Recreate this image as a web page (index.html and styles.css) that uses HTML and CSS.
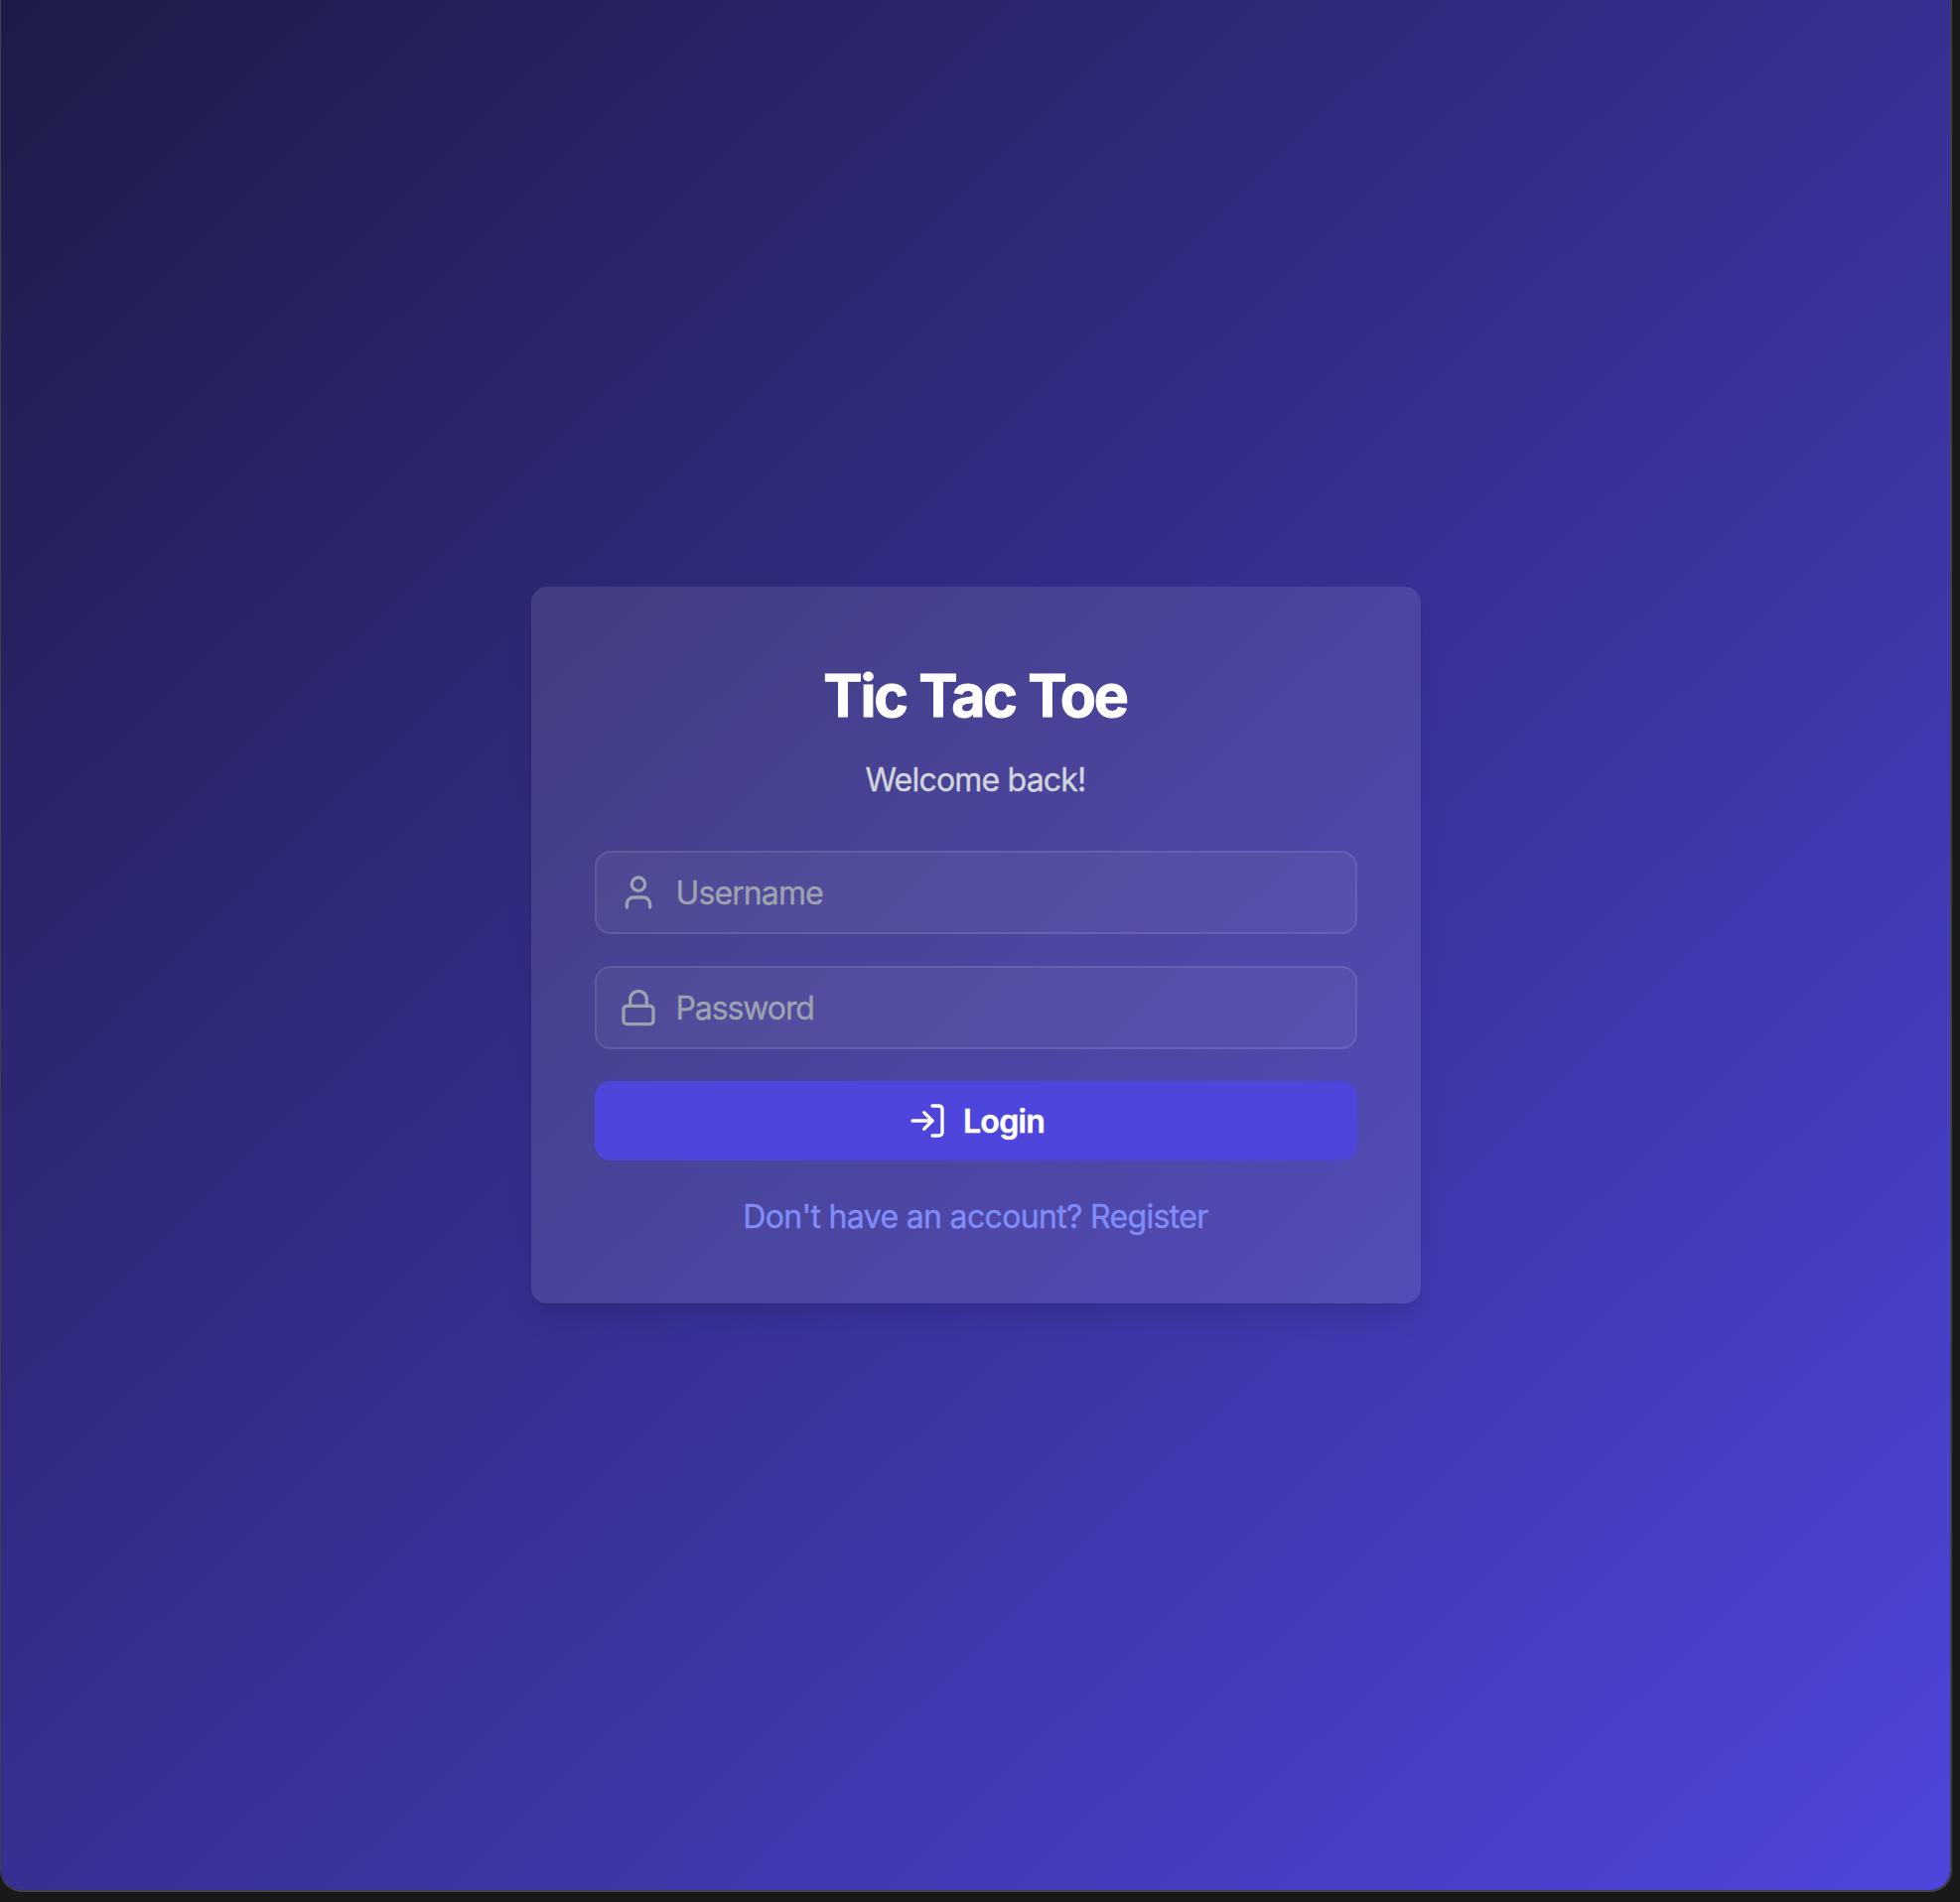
FILE: index.html
```html
<!DOCTYPE html>
<html lang="en">
<head>
<meta charset="utf-8">
<title>Tic Tac Toe</title>
<link rel="stylesheet" href="styles.css">
</head>
<body>
<main class="window">
  <section class="card">
    <h1 class="title">Tic Tac Toe</h1>
    <p class="subtitle">Welcome back!</p>
    <form class="form">
      <label class="field">
        <svg class="icon" viewBox="0 0 24 24"><path d="M19 21v-2a4 4 0 0 0-4-4H9a4 4 0 0 0-4 4v2"/><circle cx="12" cy="7" r="4"/></svg>
        <input class="input username" type="text" placeholder="Username">
      </label>
      <label class="field">
        <svg class="icon" viewBox="0 0 24 24"><rect x="3" y="11" width="18" height="11" rx="2"/><path d="M7 11V7a5 5 0 0 1 10 0v4"/></svg>
        <input class="input password" type="password" placeholder="Password">
      </label>
      <button class="button" type="button">
        <svg class="icon" viewBox="0 0 24 24"><path d="M15 3h4a2 2 0 0 1 2 2v14a2 2 0 0 1-2 2h-4"/><path d="m10 17 5-5-5-5"/><path d="M15 12H3"/></svg>
        <span>Login</span>
      </button>
    </form>
    <a class="register">Don't have an account? Register</a>
  </section>
</main>
</body>
</html>
```
FILE: styles.css
```css
* { box-sizing: border-box; }
html { height: 100%; background: #19191a; }
body {
  margin: 0;
  height: 100%;
  overflow: hidden;
  font-family: Inter, "Liberation Sans", sans-serif;
  font-size: 32px;
  line-height: 48px;
}
.window {
  width: 1966px;
  height: 1906px;
  border: 2px solid #41414a;
  border-width: 0 2px 2px 1px;
  border-radius: 0 0 22px 22px;
  background: linear-gradient(to bottom right, #1e1b48, #4e45dc) padding-box;
  display: flex;
  align-items: center;
  justify-content: center;
}
.card {
  width: 896px;
  padding: 64px;
  border-radius: 16px;
  background: rgba(255, 255, 255, 0.1);
  box-shadow: 0 20px 30px -6px rgba(0, 0, 0, 0.1), 0 8px 12px -8px rgba(0, 0, 0, 0.1);
}
.title {
  margin: 0 0 16px;
  padding-top: 2px;
  font-size: 59px;
  line-height: 88px;
  font-weight: 700;
  letter-spacing: -2.25px;
  word-spacing: 1px;
  text-indent: -1px;
  text-align: center;
  color: #fff;
  -webkit-text-stroke: 1px #fff;
}
.subtitle {
  margin: 0 0 47px;
  padding-top: 1px;
  line-height: 48px;
  letter-spacing: -0.8px;
  text-align: center;
  color: #d1d5db;
  -webkit-text-stroke: 0.4px #d1d5db;
}
.form {
  display: flex;
  flex-direction: column;
  gap: 32px;
}
.field {
  display: flex;
  align-items: center;
  gap: 18px;
  height: 84px;
  padding: 0 22px;
  border: 2px solid rgba(255, 255, 255, 0.1);
  border-radius: 16px;
  background: rgba(255, 255, 255, 0.05);
  color: #9ca3af;
}
.icon {
  width: 40px;
  height: 40px;
  flex: none;
  fill: none;
  stroke: currentColor;
  stroke-width: 2;
  stroke-linecap: round;
  stroke-linejoin: round;
}
.input {
  flex: 1;
  min-width: 0;
  padding: 2px 0 0;
  border: 0;
  outline: 0;
  background: transparent;
  font: inherit;
  color: #fff;
}
.username { letter-spacing: -0.9px; }
.password { letter-spacing: -1.1px; }
.input::placeholder {
  color: #9ca3af;
  opacity: 1;
  -webkit-text-stroke: 0.4px #9ca3af;
}
.button {
  display: flex;
  align-items: center;
  justify-content: center;
  gap: 16px;
  height: 80px;
  padding: 0 0 0 1px;
  border: 0;
  border-radius: 16px;
  background: #4e45dc;
  color: #fff;
  font: inherit;
  font-weight: 600;
  letter-spacing: -0.7px;
  -webkit-text-stroke: 0.5px #fff;
}
.button span { padding-top: 2px; }
.register {
  display: block;
  margin-top: 32px;
  padding-top: 1px;
  line-height: 47px;
  letter-spacing: -0.66px;
  text-align: center;
  color: #818cf8;
  -webkit-text-stroke: 0.4px #818cf8;
}
```
